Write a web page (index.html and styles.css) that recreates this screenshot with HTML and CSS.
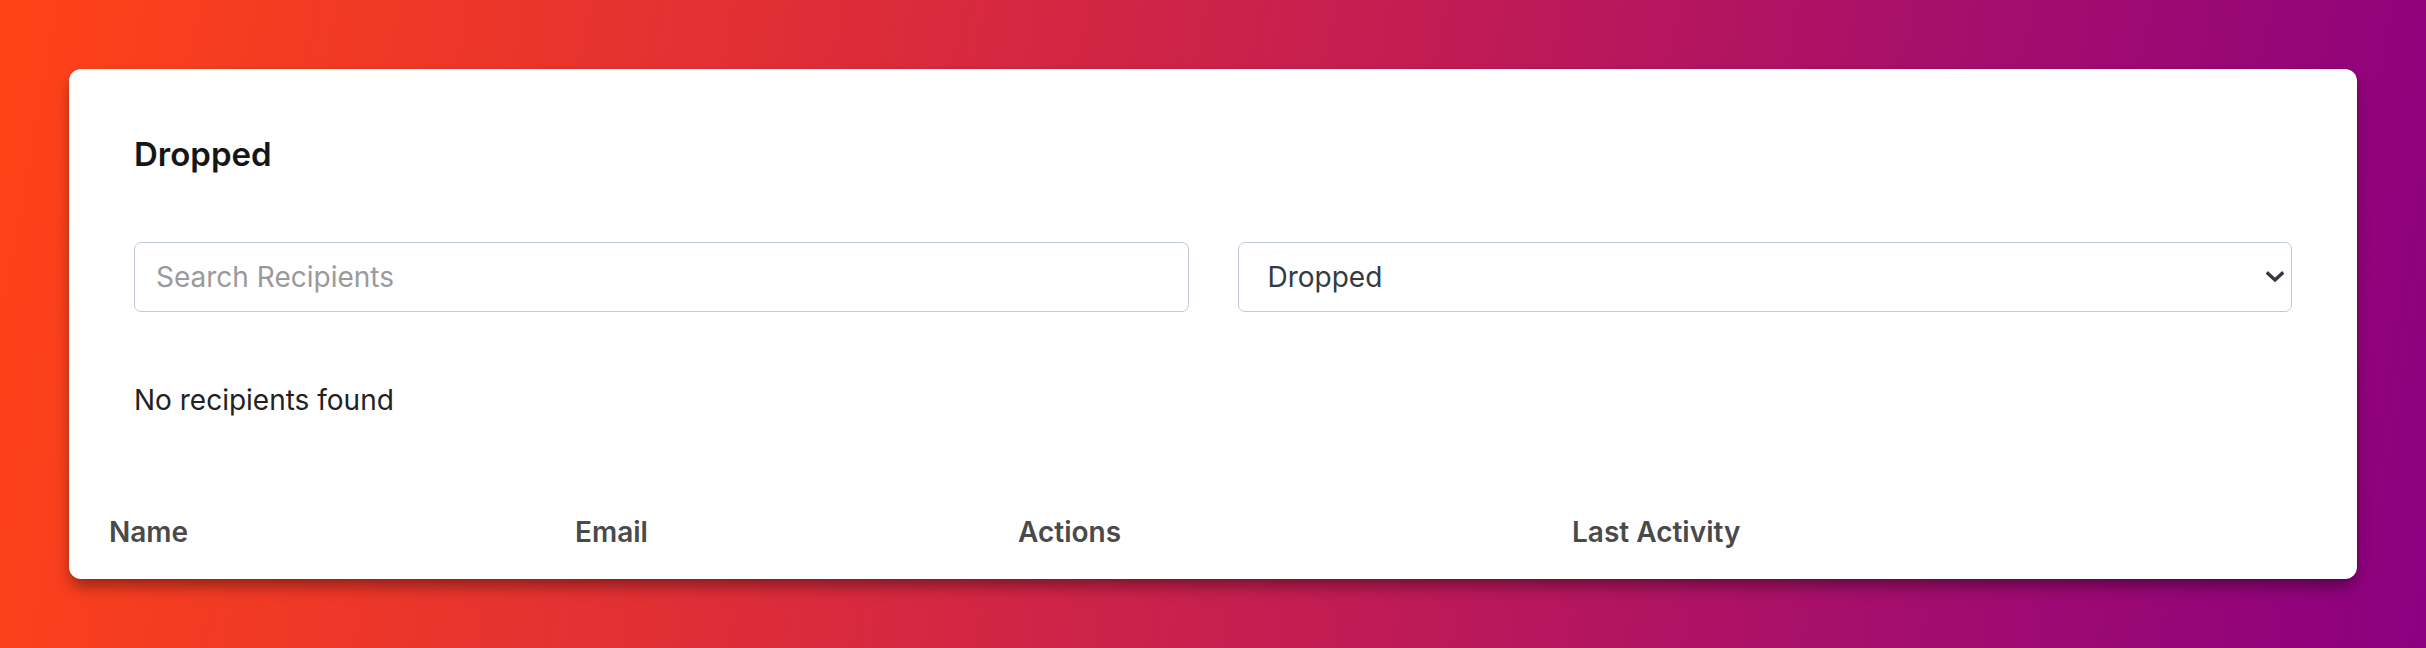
FILE: index.html
```html
<!DOCTYPE html>
<html lang="en">
<head>
<meta charset="utf-8">
<title>Dropped</title>
<link rel="stylesheet" href="styles.css">
</head>
<body>
<div class="card">
  <h2 class="title">Dropped</h2>
  <div class="filters">
    <input class="field search" type="text" placeholder="Search Recipients">
    <div class="field select">
      <span class="select-value">Dropped</span>
      <svg class="chevron" viewBox="0 0 18 12" width="18" height="12" aria-hidden="true">
        <path d="M2 2.5 L9 9 L16 2.5" fill="none" stroke="#343a40" stroke-width="3.4" stroke-linecap="square" stroke-linejoin="miter"/>
      </svg>
    </div>
  </div>
  <p class="empty">No recipients found</p>
  <div class="table-head">
    <div class="th">Name</div>
    <div class="th">Email</div>
    <div class="th">Actions</div>
    <div class="th">Last Activity</div>
  </div>
</div>
</body>
</html>
```
FILE: styles.css
```css
html, body {
  margin: 0;
  height: 100%;
}
body {
  width: 2426px;
  height: 648px;
  box-sizing: border-box;
  padding: 69px 69px 0 69px;
  background: linear-gradient(100deg, #ff4317 0%, #e12f35 30%, #c41d52 55%, #a50e6c 78%, #8c0080 100%);
  font-family: Inter, "Noto Sans", sans-serif;
  overflow: hidden;
}
.card {
  width: 2288px;
  height: 510px;
  box-sizing: border-box;
  background: #fff;
  border-radius: 12px;
  padding: 65px 65px 0 65px;
  box-shadow: 0 0 0 1px rgba(0,0,0,0.03), 0 9px 15px -2px rgba(0,0,0,0.4);
}
.title {
  margin: 0;
  font-size: 33px;
  line-height: 40px;
  font-weight: 600;
  color: #161616;
}
.filters {
  margin-top: 68px;
  display: grid;
  grid-template-columns: 1fr 1fr;
  column-gap: 49px;
}
.field {
  height: 70px;
  box-sizing: border-box;
  border: 1.5px solid #bfcad6;
  border-radius: 7px;
  background: #fff;
  font-family: Inter, "Noto Sans", sans-serif;
  font-size: 28px;
  color: #333a40;
}
.search {
  width: 100%;
  padding: 0 21px;
  outline: none;
}
.search::placeholder {
  color: #9a9a9a;
}
.select {
  display: flex;
  align-items: center;
  justify-content: space-between;
  padding: 0 7px 0 29px;
}
.chevron {
  display: block;
}
.empty {
  margin: 68px 0 0 0;
  font-size: 28px;
  line-height: 40px;
  color: #222;
}
.table-head {
  margin: 92px -65px 0 -65px;
  display: grid;
  grid-template-columns: 466px 443px 554px 1fr;
}
.th {
  padding-left: 40px;
  font-size: 28px;
  line-height: 40px;
  font-weight: 600;
  color: #4a4a4a;
}
```
